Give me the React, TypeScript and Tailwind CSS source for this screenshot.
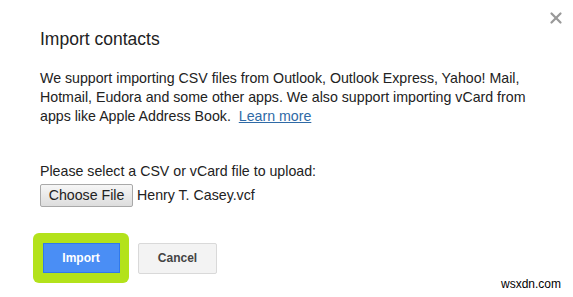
import { X } from 'lucide-react';

const App = () => {
  return (
    <div className="relative h-[297px] w-[573px] overflow-hidden bg-white font-['Liberation_Sans',Arial,sans-serif] text-[#222]">
      {/* Close */}
      <button className="absolute right-[8px] top-[9px] text-[#999]">
        <X size={18} strokeWidth={3} />
      </button>

      <div className="flex flex-col pl-[40px] pt-[28px]">
        <h2 className="text-[17.5px] leading-[22px]">Import contacts</h2>

        <p className="mt-[19px] text-[14.2px] leading-[19px]">
          We support importing CSV files from Outlook, Outlook Express, Yahoo! Mail,
          <br />
          Hotmail, Eudora and some other apps. We also support importing vCard from
          <br />
          apps like Apple Address Book.&nbsp;{' '}
          <a href="#" className="text-[#2f6aa6] underline">
            Learn more
          </a>
        </p>

        <p className="mt-[36px] text-[14.2px] leading-[19px]">
          Please select a CSV or vCard file to upload:
        </p>
        <div className="mt-[3px] flex items-center gap-[4px]">
          <span className="flex h-[23px] w-[93px] items-center justify-center rounded-[2px] border border-[#a9a9a9] bg-gradient-to-b from-[#f6f6f6] to-[#dddddd] text-[14.2px]">
            Choose File
          </span>
          <span className="text-[14.2px]">Henry T. Casey.vcf</span>
        </div>

        <div className="mt-[26px] ml-[-7px] flex items-center gap-[9px]">
          <div className="flex h-[50px] w-[96px] items-center justify-center rounded-[6px] bg-[#b3e21b]">
            <span className="flex h-[30px] w-[77px] items-center justify-center border border-[#3079ed] bg-[#4a8ef5] text-[12px] font-bold text-white">
              Import
            </span>
          </div>
          <span className="flex h-[31px] w-[79px] items-center justify-center rounded-[2px] border border-[#d9d9d9] bg-[#f3f3f3] text-[12px] font-bold text-[#444]">
            Cancel
          </span>
        </div>
      </div>

      <span className="absolute bottom-[4px] right-[12px] text-[12px] text-black">wsxdn.com</span>
    </div>
  );
};

export default App;
